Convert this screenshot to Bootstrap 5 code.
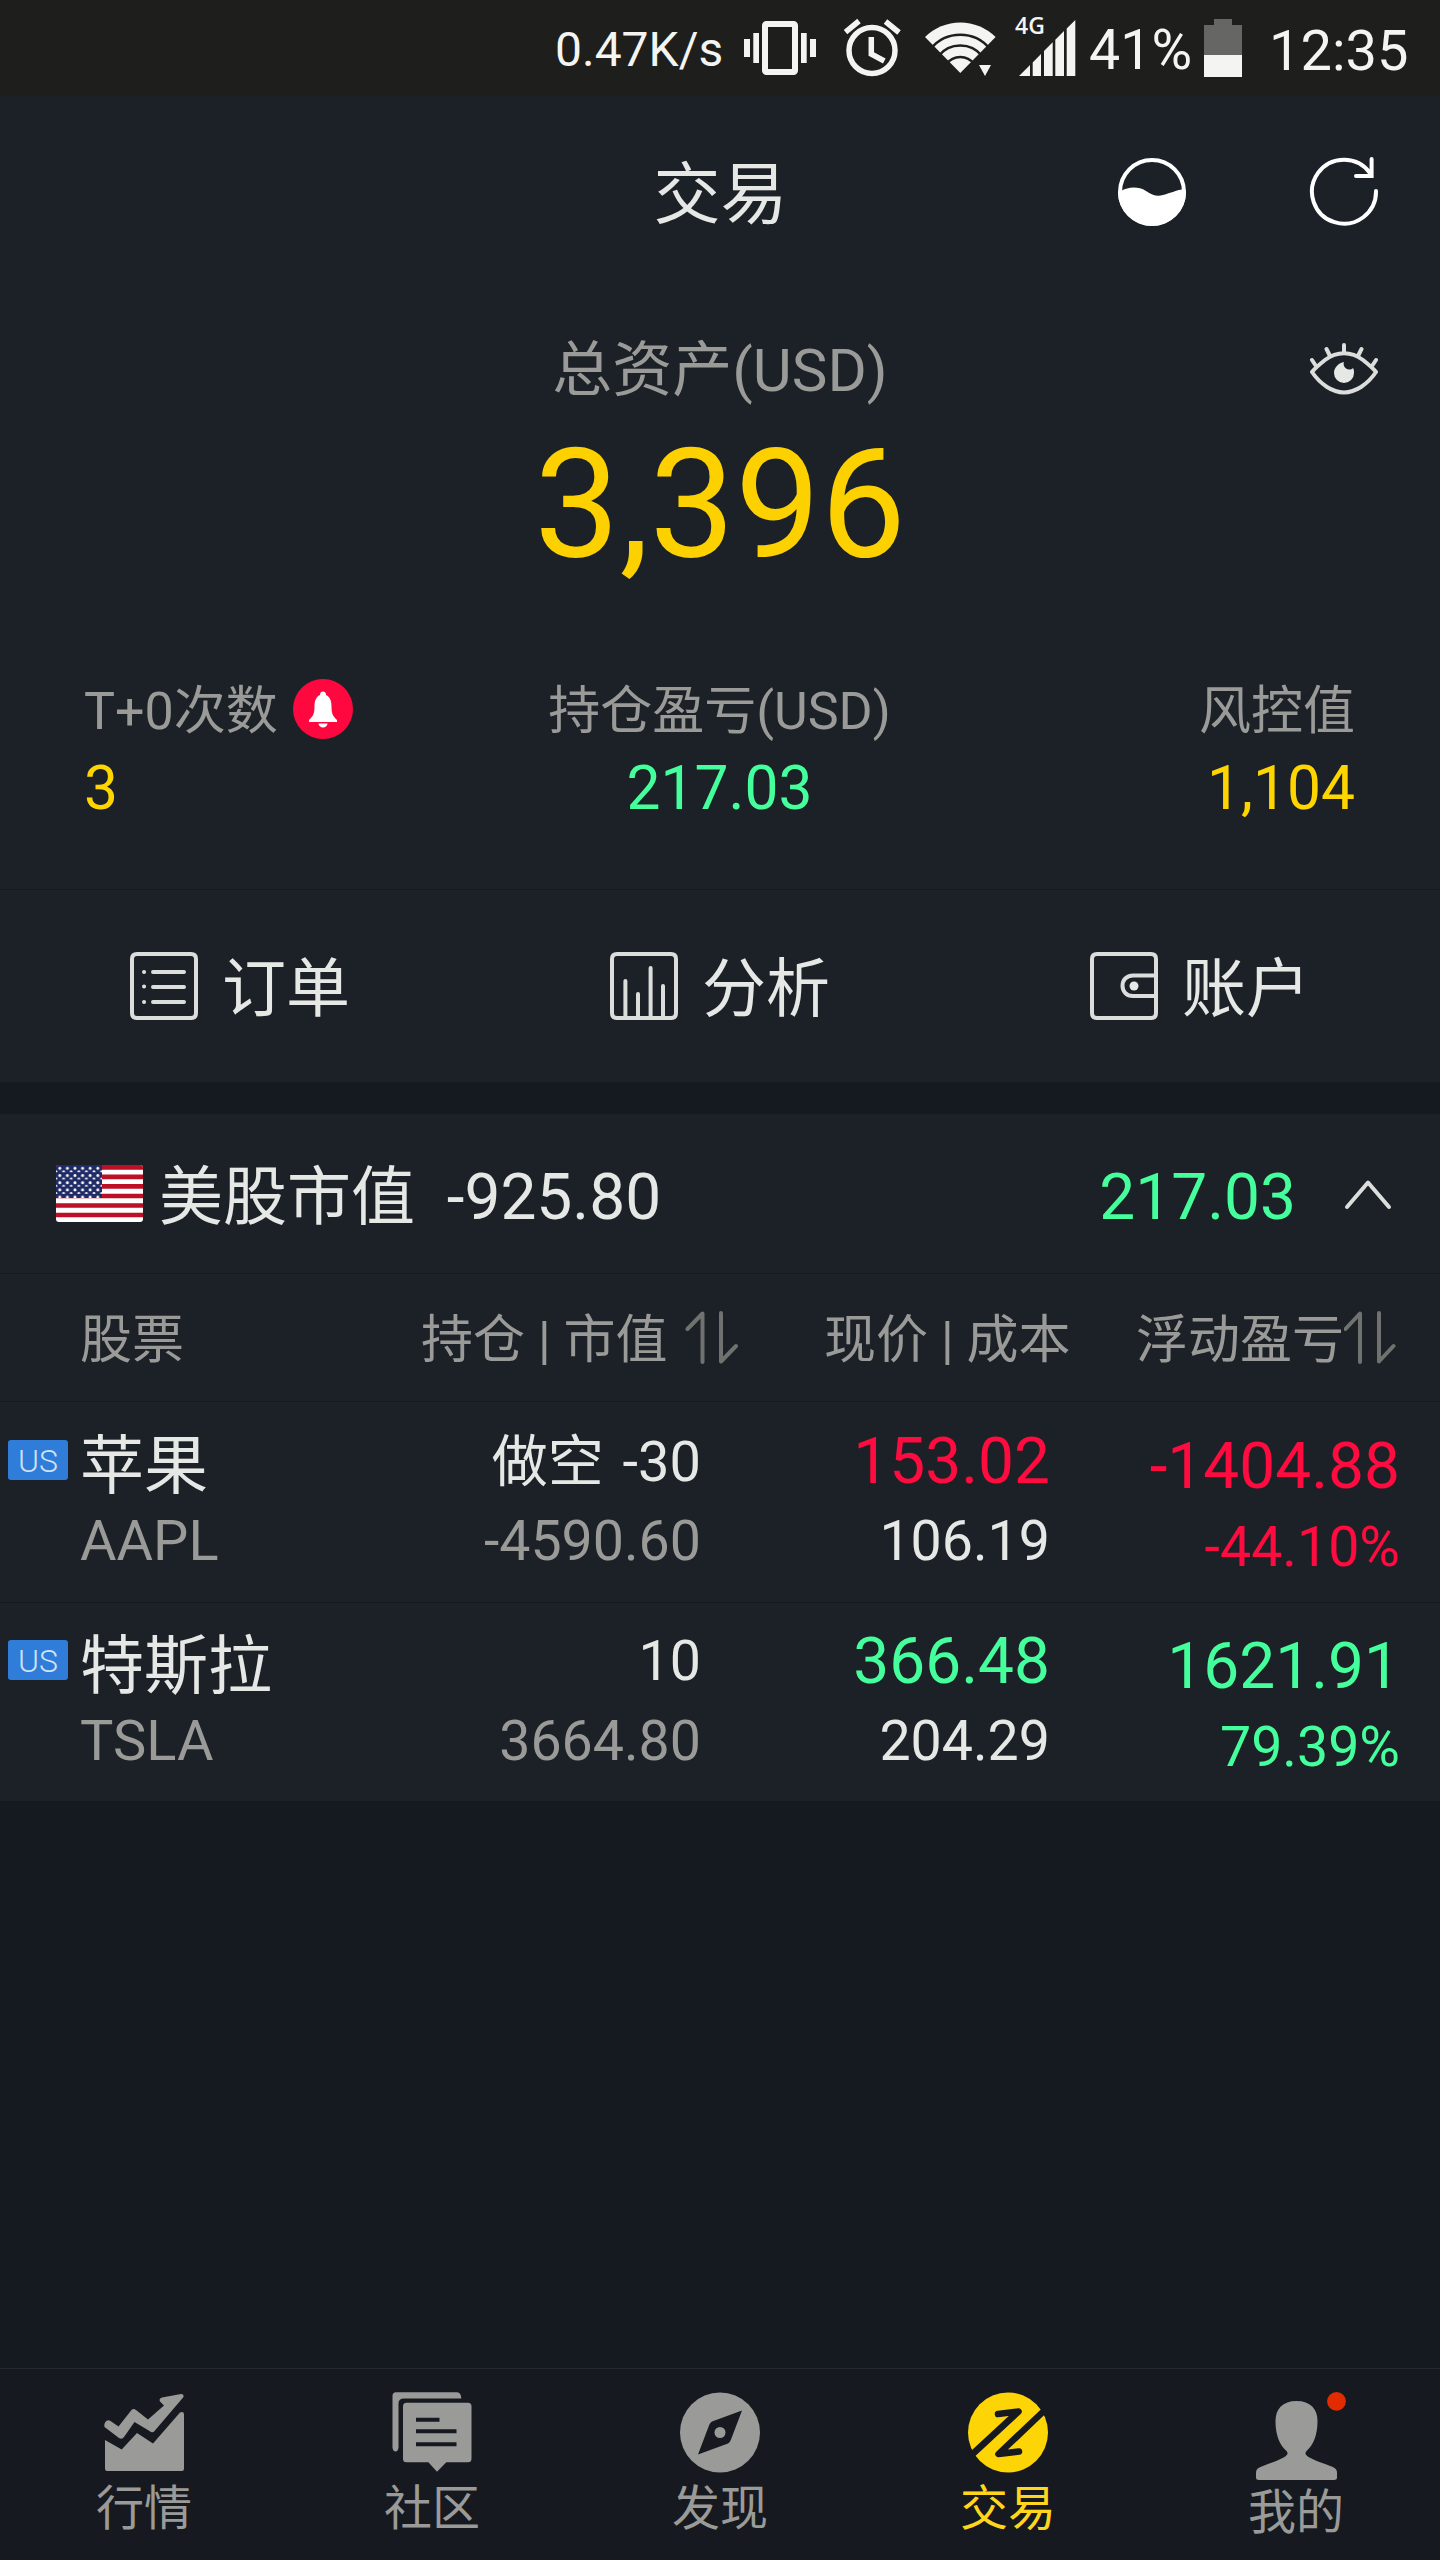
<!DOCTYPE html>
<html lang="zh-CN" data-bs-theme="dark">
<head>
<meta charset="utf-8">
<meta name="viewport" content="width=device-width, initial-scale=1">
<title>交易</title>
<link href="https://cdn.jsdelivr.net/npm/bootstrap@5.3.0/dist/css/bootstrap.min.css" rel="stylesheet">
<style>
  body { background: #151920; color: #e6e8e6; font-family: Roboto, "Noto Sans CJK SC", sans-serif; white-space: nowrap; }
  .app { width: 1440px; height: 2560px; overflow: hidden; }
  svg { display: block; flex: none; }
  .panel { background: #1c2127; }
  .c-muted { color: #9a9b98; }
  .c-gold { color: #ffd500; }
  .c-up { color: #45ff9c; }
  .c-down { color: #ff0b3f; }
  .line { fill: none; stroke: #dcdedc; stroke-width: 4; stroke-linecap: round; stroke-linejoin: round; }
  .sort { fill: none; stroke: #70726f; stroke-width: 4; stroke-linecap: round; stroke-linejoin: round; }

  .status { height: 96px; background: #1e1e1c; color: #f4f4f2; padding-left: 555px; font-size: 56px; line-height: 102px; }
  .speed { width: 189px; font-size: 48px; line-height: 99px; }
  .alarm { margin-left: 28px; }
  .wifi { margin-left: 23px; }
  .signal { margin-left: 17px; }
  .pct { width: 115px; margin-left: 13px; font-size: 55.500px; }
  .clock { margin-left: 27px; }

  .hero { height: 794px; border-bottom: 1px solid #15191e; }
  .topbar { height: 192px; padding: 0 61px 0 62px; }
  .topbar .side { width: 262px; }
  .ttl { font-size: 67px; line-height: 68px; padding-top: 5px; }
  .total { height: 304px; }
  .total-row { padding: 32px 61px 0; }
  .total-label { font-size: 60px; line-height: 98px; padding-top: 2px; }
  .spacer { width: 70px; }
  .total-num { font-size: 152px; line-height: 168px; color: #fdd100; padding-top: 1px; }
  .summary { padding: 83px 85px 0 84px; font-size: 60.500px; }
  .summary .side { width: 300px; }
  .summary .lbl { font-size: 52px; line-height: 74px; }
  .summary .val { line-height: 79px; }
  .bell { margin: -6px 0 0 15px; }

  .actions { height: 192px; font-size: 64px; line-height: 72px; }
  .actions .act { gap: 24px; }
  .actions span { padding-top: 8px; }

  .market { margin-top: 32px; height: 160px; padding: 0 48px 0 56px; font-size: 64px; line-height: 64px; border-bottom: 1px solid #15191e; }
  .market span { padding-top: 8px; }
  .market .nm { margin-left: 16px; white-space: pre; }
  .market .pl { margin-right: 48px; }
  .thead-row { height: 128px; font-size: 52px; line-height: 60px; padding-top: 37px; border-bottom: 1px solid #15191e; }
  .thead-row svg { margin-top: -3px; }
  .th-a { width: 421px; padding-left: 80px; }
  .th-b { width: 403px; gap: 17px; }
  .th-c { width: 312px; }
  .pos-row { height: 200px; font-size: 55.500px; }
  .pos-row + .pos-row { height: 199px; border-top: 1px solid #15191e; }
  .w-a { width: 300px; }
  .w-b { width: 401px; }
  .w-c { width: 349px; }
  .w-d { width: 350px; }
  .pos-row .w-a, .pos-row .w-d { padding-top: 25px; }
  .pos-row .w-b, .pos-row .w-c { padding-top: 20px; }
  .pos-row + .pos-row .w-a, .pos-row + .pos-row .w-d { padding-top: 24px; }
  .pos-row + .pos-row .w-b, .pos-row + .pos-row .w-c { padding-top: 19px; }
  .short { font-size: 56px; word-spacing: 5px; }
  .big { font-size: 64px; }
  .l80 { line-height: 80px; }
  .l68 { line-height: 68px; }
  .l82 { line-height: 82px; }
  .tag { width: 60px; height: 40px; margin: 13px 12px 0 8px; background: #2f7dd8; color: #cfe2f6; border-radius: 3px; font-size: 32px; line-height: 42px; text-align: center; font-weight: 300; }
  .code { padding-left: 80px; font-size: 56px; }

  .tabs { height: 192px; border-top: 1px solid #282b2d; background: #161a20; font-size: 48px; }
  .tabs a { color: #9a9b98; text-decoration: none; }
  .tabs span { line-height: 60px; }
  .tabs .on { color: #ffd61c; }
</style>
<script src="https://cdn.jsdelivr.net/npm/bootstrap@5.3.0/dist/js/bootstrap.bundle.min.js"></script>
</head>
<body>
<div class="app d-flex flex-column">

  <div class="status d-flex">
    <div class="speed">0.47K/s</div>
    <svg width="72" height="96" viewBox="744 0 72 96" fill="#f4f4f2">
      <rect x="765" y="24" width="30" height="48" rx="1.5" fill="none" stroke="#f4f4f2" stroke-width="6"/>
      <path d="M753.300 33h5.700v30h-5.700zM744 39h6v18h-6zM801 33h5.700v30H801zM810 39h6v18h-6z"/>
    </svg>
    <svg class="alarm" width="58" height="96" viewBox="844 0 58 96" fill="none" stroke="#f4f4f2" stroke-width="5.500">
      <circle cx="872" cy="50.500" r="23"/><path d="M871.300 37v17l13 7M845.500 32l13.500-11M885.500 21.500l13.500 11"/>
    </svg>
    <svg class="wifi" width="72" height="96" viewBox="925 0 72 96">
      <path d="M960.300 73 925 37a50 50 0 0 1 70.600 0z" fill="#f4f4f2"/>
      <g fill="none" stroke="#1e1e1c" stroke-width="2.400"><path d="M931 48.500a38 38 0 0 1 58.600 0M938.500 56a28 28 0 0 1 43.600 0M946.500 64a17 17 0 0 1 27.600 0"/></g>
      <path d="M979 65h12l-6 11z" fill="#f4f4f2"/>
    </svg>
    <svg class="signal" width="62" height="96" viewBox="1014 0 62 96" fill="#f4f4f2">
      <path d="M1019 76l11-11v11zM1032.700 76V62.500l8.300-8.500v22zM1044 76V51l8.700-8.700V76zM1055.300 76V39.700l8.700-8.700v45zM1066.700 76V28.500l8.600-8.500v56z"/>
      <text x="1015" y="33.500" font-family="Open Sans, sans-serif" font-weight="600" font-size="23">4G</text>
    </svg>
    <div class="pct">41%</div>
    <svg width="38" height="96" viewBox="1204 0 38 96">
      <path d="M1204 25h10v-6h18v6h10v31h-38z" fill="#666664"/><path d="M1204 55h38v22h-38z" fill="#f4f4f2"/>
    </svg>
    <div class="clock">12:35</div>
  </div>

  <header class="panel hero">
    <div class="topbar d-flex justify-content-between">
      <div class="side"></div>
      <div class="ttl d-flex align-items-center">交易</div>
      <div class="side d-flex justify-content-between align-items-center">
        <svg width="70" height="70" viewBox="1117 157 70 70"><circle cx="1152" cy="192" r="32" fill="none" stroke="#fff" stroke-width="4"/><path d="M1118 192l3-1c7-4 17-5 25 0 6 4 11 6 17 4 8-2 13-5 22-6l1 3a34 34 0 0 1-68 0z" fill="#fff"/></svg>
        <svg width="70" height="70" viewBox="1309 157 70 70"><path d="M1376 191a32 32 0 1 1-6-18M1371.600 159v17H1356" fill="none" stroke="#fff" stroke-width="4" stroke-linecap="round"/></svg>
      </div>
    </div>
    <div class="total">
      <div class="total-row d-flex justify-content-between align-items-center">
        <div class="spacer"></div>
        <div class="total-label c-muted">总资产(USD)</div>
        <svg width="70" height="56" viewBox="1309 341 70 56"><path class="line" d="M1312 371c3-4 8-8 13-12 12-9 26-9 38 0 5 4 10 8 13 12-4 6-9 11-15 15-11 7-23 7-34 0-6-4-11-9-15-15zM1344 344v8M1326.500 348l3 6M1361.500 348l-3 6M1312 359l4 6M1376 359l-4 6"/><path d="M1344 361c-5 1-10 5-10 11a10 10 0 0 0 20 0c0-2 0-3-1-5-3 3-8 1-9-2-.500-1.500-.500-3 0-4z" fill="#e6e8e6"/></svg>
      </div>
      <div class="total-num text-center">3,396</div>
    </div>
    <div class="summary d-flex justify-content-between">
      <div class="side">
        <div class="lbl c-muted d-flex align-items-center">T+0次数
          <svg class="bell" width="60" height="60" viewBox="293 679 60 60"><circle cx="323" cy="709" r="30" fill="#ff0840"/><path d="M323 691.500c-2 0-3 1.500-3 3.500-4 2-5.500 6-5.500 11 0 7-1 10-5.500 14v2h28v-2c-4.500-4-5.500-7-5.500-14 0-5-1.500-9-5.500-11 0-2-1-3.500-3-3.500zM318.500 723.500a4.500 4 0 0 0 9 0z" fill="#fff"/></svg>
        </div>
        <div class="val c-gold">3</div>
      </div>
      <div class="text-center"><div class="lbl c-muted">持仓盈亏(USD)</div><div class="val c-up">217.03</div></div>
      <div class="side text-end"><div class="lbl c-muted">风控值</div><div class="val c-gold">1,104</div></div>
    </div>
  </header>

  <nav class="panel actions d-flex">
    <div class="act col-4 d-flex align-items-center justify-content-center">
      <svg width="68" height="68" viewBox="130 952 68 68"><path class="line" d="M137 954h54q5 0 5 5v54q0 5-5 5h-54q-5 0-5-5v-54q0-5 5-5zM153 972h31M153 987h31M153 1002h31"/><path class="line" d="M144 972h.1M144 986.500h.1M144 1002h.1"/></svg>
      <span>订单</span>
    </div>
    <div class="act col-4 d-flex align-items-center justify-content-center">
      <svg width="68" height="68" viewBox="610 952 68 68"><path class="line" d="M617 954h54q5 0 5 5v54q0 5-5 5h-54q-5 0-5-5v-54q0-5 5-5zM625.400 981v36M638 994v23M650.600 968v49M663 986v31"/></svg>
      <span>分析</span>
    </div>
    <div class="act col-4 d-flex align-items-center justify-content-center">
      <svg width="68" height="68" viewBox="1090 952 68 68"><path class="line" d="M1097 954h54q5 0 5 5v54q0 5-5 5h-54q-5 0-5-5v-54q0-5 5-5zM1156 975.500h-23c-14 0-14 20.500 0 20.500h23"/><circle cx="1134" cy="986" r="4.500" fill="#e6e8e6"/></svg>
      <span>账户</span>
    </div>
  </nav>

  <section>
    <div class="panel market d-flex align-items-center">
      <svg width="87" height="57" viewBox="0 0 87 57">
        <defs>
          <clipPath id="fr"><rect width="87" height="57" rx="3"/></clipPath>
          <pattern id="st" width="7.600" height="7.200" patternUnits="userSpaceOnUse"><circle cx="3.800" cy="3.300" r="1.500" fill="#fff"/><circle cx="0" cy="6.900" r="1.500" fill="#fff"/><circle cx="7.600" cy="6.900" r="1.500" fill="#fff"/></pattern>
        </defs>
        <g clip-path="url(#fr)">
          <rect width="87" height="57" fill="#fff"/>
          <path d="M0 2.300h87M0 11.900h87M0 21.400h87M0 31h87M0 40.500h87M0 50h87" stroke="#bd1026" stroke-width="4.700"/>
          <rect width="46" height="33" fill="#1f2b66"/><rect width="46" height="33" fill="url(#st)"/>
        </g>
      </svg>
      <span class="nm">美股市值  -925.80</span>
      <span class="pl c-up ms-auto">217.03</span>
      <svg width="48" height="32" viewBox="1344 1178 48 32"><path class="line" d="M1347 1207l21-24.500 21 24.500"/></svg>
    </div>
    <div class="panel thead-row d-flex c-muted">
      <div class="th-a">股票</div>
      <div class="th-b d-flex">持仓 | 市值
        <svg width="54" height="60" viewBox="684 1309 54 60"><path class="sort" d="M686.500 1330l15-15.500v48.500M720 1314v48.500l15-15.500"/></svg>
      </div>
      <div class="th-c">现价 | 成本</div>
      <div class="d-flex">浮动盈亏
        <svg width="54" height="60" viewBox="685 1309 54 60"><path class="sort" d="M686.500 1330l14.500-15.500v48.500M720 1314v48.500l14.500-15.500"/></svg>
      </div>
    </div>
    <div class="panel pos-row d-flex">
      <div class="w-a">
        <div class="d-flex big l80"><div class="tag">US</div>苹果</div>
        <div class="code c-muted l68">AAPL</div>
      </div>
      <div class="w-b text-end"><div class="l80 short">做空 -30</div><div class="l80 c-muted">-4590.60</div></div>
      <div class="w-c text-end"><div class="l80 big c-down">153.02</div><div class="l80">106.19</div></div>
      <div class="w-d text-end c-down"><div class="l80 big">-1404.88</div><div class="l82">-44.10%</div></div>
    </div>
    <div class="panel pos-row d-flex">
      <div class="w-a">
        <div class="d-flex big l80"><div class="tag">US</div>特斯拉</div>
        <div class="code c-muted l68">TSLA</div>
      </div>
      <div class="w-b text-end"><div class="l80">10</div><div class="l80 c-muted">3664.80</div></div>
      <div class="w-c text-end"><div class="l80 big c-up">366.48</div><div class="l80">204.29</div></div>
      <div class="w-d text-end c-up"><div class="l80 big">1621.91</div><div class="l82">79.39%</div></div>
    </div>
  </section>

  <footer class="tabs d-flex mt-auto">
    <a class="flex-fill w-100 d-flex flex-column align-items-center" href="#">
      <svg width="100" height="110" viewBox="94 2369 100 110" fill="#9a9b98"><path d="M104.500 2427c-1-5 3-8.500 6-6l8 5.500 13-16.500q2-2 4.500 0l12 9.500 16-14-4-4q-1.500-3 2-4l19-3.500q3 0 2.500 3l-29 34q-2 2.500-5 0l-15-9-10.500 15q-2 3-5 1z"/><path d="M105 2440l16.700 9.500 15.300-16.500 16 10.500 27-31q4-1.500 4 2v54q0 2.500-2 2.500h-75q-2 0-2-2.500z"/></svg>
      <span>行情</span>
    </a>
    <a class="flex-fill w-100 d-flex flex-column align-items-center" href="#">
      <svg width="100" height="110" viewBox="382 2369 100 110" fill="#9a9b98"><path d="M396 2392.300h61q4 0 4.300 6.200H404q-5.500 0-5.500 5v44q-.500 4-3 4t-3-4V2396q0-3.700 3.500-3.700z"/><path d="M406.500 2402.700h61.500q3.500 0 3.500 3.500v52.600q0 3.500-3.500 3.500h-21.700l-9.300 9.400-8.600-9.400h-21.900q-3.500 0-3.500-3.500v-52.600q0-3.500 3.500-3.500z"/><path d="M416 2419.700h23.500M416 2431.300h40.500M416 2444.300h40.500" stroke="#161a20" stroke-width="4"/></svg>
      <span>社区</span>
    </a>
    <a class="flex-fill w-100 d-flex flex-column align-items-center" href="#">
      <svg width="100" height="110" viewBox="670 2369 100 110" fill="#9a9b98"><circle cx="720" cy="2432.500" r="40"/><path d="M742 2410.500l-30 11q-2 1-3 4l-11 29 30-11q2-1 3-4z" fill="#161a20"/><circle cx="720" cy="2432.500" r="5.500"/></svg>
      <span>发现</span>
    </a>
    <a class="flex-fill w-100 d-flex flex-column align-items-center on" href="#">
      <svg width="100" height="110" viewBox="958 2369 100 110"><circle cx="1008" cy="2432.500" r="40" fill="#fdd405"/><path d="M971 2455.500l47.500-44-20.500 2.500M1047 2408l-48.500 46 20.500-2.500" fill="none" stroke="#161a20" stroke-width="6.500" stroke-linecap="round" stroke-linejoin="round"/></svg>
      <span>交易</span>
    </a>
    <a class="flex-fill w-100 d-flex flex-column align-items-center" href="#">
      <svg width="100" height="114" viewBox="1246 2369 100 114"><path d="M1296.500 2401c-14 0-21 8-21 20 0 14 4 24 11 30 2 2.500 1 4-2 6-9 5-21 8-26 11-2 1-2.500 3-2.500 5v4.500q0 2.500 3 2.500h75q3 0 3-2.500v-4.500c0-2-.500-4-2.500-5-5-3-17-6-26-11-3-2-4-3.500-2-6 7-6 11-16 11-30 0-12-7-20-21-20z" fill="#9a9b98"/><circle cx="1336.500" cy="2401.300" r="9.400" fill="#e22b00"/></svg>
      <span>我的</span>
    </a>
  </footer>
</div>
</body>
</html>
